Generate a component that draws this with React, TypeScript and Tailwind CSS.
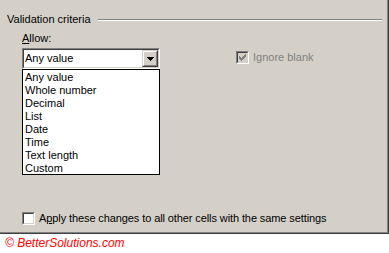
import React from "react";

const items = ["Any value", "Whole number", "Decimal", "List", "Date", "Time", "Text length", "Custom"];

function Sunken({ children, className = "" }: { children?: React.ReactNode; className?: string }) {
  return (
    <div className={`border border-t-[#808080] border-l-[#808080] border-r-white border-b-white ${className}`}>
      <div className="h-full w-full border border-t-[#404040] border-l-[#404040] border-r-[#d4d0c8] border-b-[#d4d0c8]">
        {children}
      </div>
    </div>
  );
}

export default function App() {
  return (
    <div
      className="w-[389px] h-[253px] bg-white overflow-hidden text-[11px] leading-[13px] text-black"
      style={{ fontFamily: '"Liberation Sans", Arial, sans-serif' }}
    >
      <div className="relative h-[234px] w-[389px] bg-[#d4d0c8] border-r border-b border-[#404040] shadow-[inset_-1px_-1px_0_#808080] flex flex-col">
        {/* header */}
        <div className="flex items-center pl-[7px] pr-[6px] pt-[13px]">
          <span>Validation criteria</span>
          <div className="flex-1 ml-[7px] border-t border-b border-t-[#808080] border-b-white" />
        </div>
        {/* allow */}
        <div className="pl-[22px] mt-[6px]">
          <span>
            <span className="underline underline-offset-[1px]">A</span>llow:
          </span>
        </div>
        <div className="flex items-start pl-[22px] mt-[3px]">
          <div className="relative w-[138px] h-[21px]">
            <Sunken className="w-[138px] h-[21px]">
              <div className="flex h-full bg-white">
                <div className="flex-1 pl-[1px] pt-[2px]">Any value</div>
                <div className="w-[16px] h-[17px] border border-t-[#d4d0c8] border-l-[#d4d0c8] border-r-[#404040] border-b-[#404040]">
                  <div className="h-full w-full bg-[#d4d0c8] border border-t-white border-l-white border-r-[#808080] border-b-[#808080] flex items-center justify-center">
                    <svg width="7" height="4" viewBox="0 0 7 4" className="block">
                      <path d="M0 0H7L3.5 4Z" fill="#000" shapeRendering="crispEdges" />
                    </svg>
                  </div>
                </div>
              </div>
            </Sunken>
            <div className="absolute left-0 top-[21px] w-[138px] h-[106px] border border-black bg-white flex flex-col pt-[1px]">
              {items.map((it) => (
                <div key={it} className="h-[13px] pl-[2px] whitespace-nowrap">
                  {it}
                </div>
              ))}
            </div>
          </div>
          <div className="flex items-center ml-[76px] mt-[3px]">
            <Sunken className="w-[13px] h-[13px]">
              <div className="w-full h-full bg-[#d4d0c8] flex items-center justify-center">
                <svg width="7" height="7" viewBox="0 0 7 7" className="block">
                  <path d="M0 2v3l2 2l5-5v-3l-5 5z" fill="#808080" shapeRendering="crispEdges" />
                </svg>
              </div>
            </Sunken>
            <span className="ml-[4px] text-[#808080]">Ignore blank</span>
          </div>
        </div>
        {/* bottom */}
        <div className="flex items-center pl-[22px] mt-[143px]">
          <Sunken className="w-[13px] h-[13px]">
            <div className="w-full h-full bg-white" />
          </Sunken>
          <span className="ml-[4px] whitespace-nowrap tracking-[-0.1px]">
            A<span className="underline underline-offset-[1px]">p</span>ply these changes to all other cells with the same settings
          </span>
        </div>
      </div>
      <div
        className="pl-[5px] pt-[2px] text-[12px] italic text-[#ff0000] leading-[14px]"
        style={{ fontFamily: '"Liberation Sans", Arial, sans-serif' }}
      >
        © BetterSolutions.com
      </div>
    </div>
  );
}
